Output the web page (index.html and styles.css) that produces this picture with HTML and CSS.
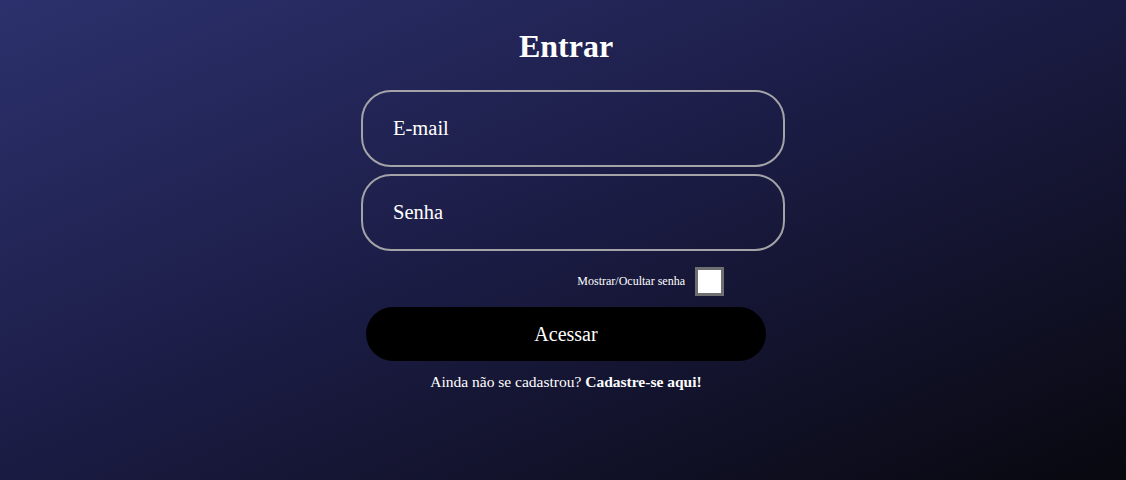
FILE: index.html
```html
<!DOCTYPE html>
<html lang="pt-BR">
<head>
<meta charset="utf-8">
<title>Entrar</title>
<link rel="stylesheet" href="styles.css">
</head>
<body>
<main class="page">
  <h1 class="title">Entrar</h1>
  <form class="form">
    <input class="field" type="email" placeholder="E-mail">
    <input class="field" type="password" placeholder="Senha">
    <label class="toggle">
      <span class="toggle-text">Mostrar/Ocultar senha</span>
      <input class="toggle-box" type="checkbox">
    </label>
    <button class="submit" type="button">Acessar</button>
    <p class="signup">Ainda não se cadastrou? <a class="signup-link" href="#">Cadastre-se aqui!</a></p>
  </form>
</main>
</body>
</html>
```
FILE: styles.css
```css
html, body {
  margin: 0;
  padding: 0;
}
body {
  min-height: 100vh;
  background: linear-gradient(to bottom right, #2c316d 0%, #1c1d47 45%, #08080f 100%);
  font-family: "Liberation Serif", "Times New Roman", serif;
  color: #fff;
}
.page {
  display: flex;
  flex-direction: column;
  align-items: center;
  padding: 28px 0 0 6px;
}
.title {
  margin: 0 0 25px;
  font-size: 32px;
  font-weight: bold;
  line-height: 37px;
}
.form {
  display: flex;
  flex-direction: column;
  align-items: center;
  width: 400px;
}
.field {
  box-sizing: border-box;
  width: 424px;
  height: 77px;
  margin: 0 0 7px 14px;
  padding: 0 30px;
  border: 2px solid #a4a4a8;
  border-radius: 30px;
  background: transparent;
  color: #fff;
  font-family: inherit;
  font-size: 20.5px;
  outline: none;
}
.field::placeholder {
  color: #fff;
  opacity: 1;
}
.toggle {
  display: flex;
  align-items: center;
  justify-content: flex-end;
  gap: 10px;
  align-self: stretch;
  margin-top: 9px;
  padding-right: 42px;
  font-size: 12px;
}
.toggle-box {
  appearance: none;
  -webkit-appearance: none;
  box-sizing: border-box;
  width: 29px;
  height: 29px;
  margin: 0;
  border: 3px solid #6f6f72;
  background: #fff;
}
.submit {
  box-sizing: border-box;
  width: 400px;
  height: 54px;
  margin-top: 11px;
  border: none;
  border-radius: 27px;
  background: #000;
  color: #fff;
  font-family: inherit;
  font-size: 20px;
}
.signup {
  margin: 12px 0 0;
  font-size: 15.5px;
  line-height: 17px;
}
.signup-link {
  color: #fff;
  font-weight: bold;
  text-decoration: none;
}
```
